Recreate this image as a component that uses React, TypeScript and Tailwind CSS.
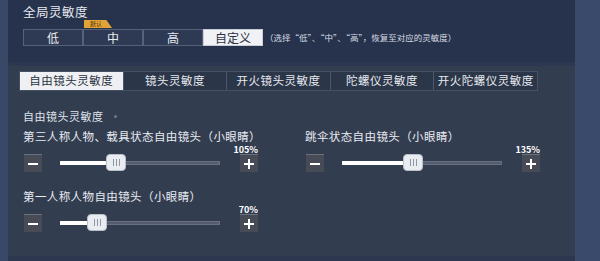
import React from 'react';

const FONT = { fontFamily: '"Noto Sans CJK SC", "Noto Sans", sans-serif' };

const levels = ['低', '中', '高', '自定义'];
const tabs = ['自由镜头灵敏度', '镜头灵敏度', '开火镜头灵敏度', '陀螺仪灵敏度', '开火陀螺仪灵敏度'];

type SliderProps = { label: string; value: number; fill: number; thumb: number };

const StepButton: React.FC<{ sign: '-' | '+' }> = ({ sign }) => (
  <div className="w-[18px] h-[18px] bg-[#464b55] border-t border-[#6a707c] flex items-center justify-center shrink-0">
    <div className="relative w-[10px] h-[10px] flex items-center justify-center">
      <div className="w-[10px] h-[2px] bg-white" />
      {sign === '+' && <div className="absolute w-[2px] h-[10px] bg-white" />}
    </div>
  </div>
);

const SensSlider: React.FC<SliderProps> = ({ label, value, fill, thumb }) => (
  <div className="flex flex-col items-start">
    <div className="w-fit text-[11.5px] leading-[12px] mt-[1px] text-[#e8ebf0] tracking-[0.4px]">{label}</div>
    <div className="flex items-center mt-[12px]">
      <div className="ml-[1px]">
        <StepButton sign="-" />
      </div>
      <div className="relative w-[160px] h-[18px] ml-[18px] flex items-center">
        <div className="w-full h-[4px] bg-[#6b7280]/60 border border-[#7d8594]/50" />
        <div className="absolute left-0 h-[4px] bg-white" style={{ width: fill }} />
        <div
          className="absolute top-0 w-[20px] h-[17px] rounded-[4px] bg-[#e9ecf1] border border-[#b9c0cc] flex items-center justify-center gap-[2px]"
          style={{ left: thumb }}
        >
          <div className="w-[1px] h-[7px] bg-[#8e96a3]" />
          <div className="w-[1px] h-[7px] bg-[#8e96a3]" />
          <div className="w-[1px] h-[7px] bg-[#8e96a3]" />
        </div>
      </div>
      <div className="relative ml-[20px]">
        <div className="absolute right-0 bottom-[18px] text-[9px] leading-[9px] font-bold text-white whitespace-nowrap">
          {value}%
        </div>
        <StepButton sign="+" />
      </div>
    </div>
  </div>
);

const App: React.FC = () => {
  return (
    <div className="w-[600px] h-[261px] flex bg-[#2d3850] overflow-hidden" style={FONT}>
      <div className="w-[8px] bg-[#3a4867]" />
      <div className="flex-1 flex flex-col">
        {/* global sensitivity */}
        <div className="h-[62px] bg-[#27334c] pl-[15px] pt-[4px]">
          <div className="text-[12.5px] leading-[16px] text-[#e6e9ef] tracking-[0.5px]">全局灵敏度</div>
          <div className="flex items-end">
            <div className="flex relative">
              {levels.map((l, i) => (
                <div
                  key={l}
                  className={
                    i === 3
                      ? 'w-[60px] h-[17px] mt-[9px] bg-[#f1f2f5] text-[#2a3040] text-[12px] flex items-center justify-center border border-[#c9cdd6]'
                      : 'w-[60px] h-[17px] mt-[9px] bg-[#2e3a53] text-[#e8ebf0] text-[12px] flex items-center justify-center border border-[#56617a]'
                  }
                >
                  {l}
                </div>
              ))}
              <div className="absolute left-[61px] top-0 w-[28px] h-[8px] bg-[#e2a437] text-[6px] leading-[8px] text-[#4a2f0a] pl-[6px] [clip-path:polygon(0_0,80%_0,100%_100%,0_100%)]">
                默认
              </div>
            </div>
            <div className="text-[8.5px] leading-[17px] text-[#d9dde6] ml-[2px]">
              （选择“低”、“中”、“高”，恢复至对应的灵敏度）
            </div>
          </div>
        </div>
        {/* detail panel */}
        <div className="flex-1 mt-[4px] mb-[5px] bg-[#333d50] pl-[11px] pt-[5px]">
          <div className="flex w-[519px] h-[20px] bg-[#2c3649] border border-[#465166]">
            {tabs.map((t, i) => (
              <div
                key={t}
                className={
                  i === 0
                    ? 'w-[103px] h-full bg-[#eef0f3] text-[#2a3040] text-[11.5px] flex items-center justify-center tracking-[0.5px]'
                    : 'w-[104px] h-full text-[#e6e9ef] text-[11.5px] flex items-center justify-center border-l border-[#4d586d] tracking-[0.5px]'
                }
              >
                {t}
              </div>
            ))}
          </div>
          <div className="flex items-center mt-[18px] ml-[4px]">
            <span className="text-[11px] leading-[14px] text-[#dfe3ea] tracking-[0.5px]">自由镜头灵敏度</span>
            <span className="ml-[10px] w-[3px] h-[3px] rounded-full bg-[#6f7a8d]" />
          </div>
          <div className="flex mt-[6px] ml-[4px]">
            <div className="w-[282px]">
              <SensSlider label="第三人称人物、载具状态自由镜头（小眼睛）" value={105} fill={50} thumb={46} />
            </div>
            <SensSlider label="跳伞状态自由镜头（小眼睛）" value={135} fill={65} thumb={61} />
          </div>
          <div className="mt-[17px] ml-[4px]">
            <SensSlider label="第一人称人物自由镜头（小眼睛）" value={70} fill={30} thumb={27} />
          </div>
        </div>
      </div>
      <div className="w-[25px] bg-[#3a4a6b]" />
    </div>
  );
};

export default App;
